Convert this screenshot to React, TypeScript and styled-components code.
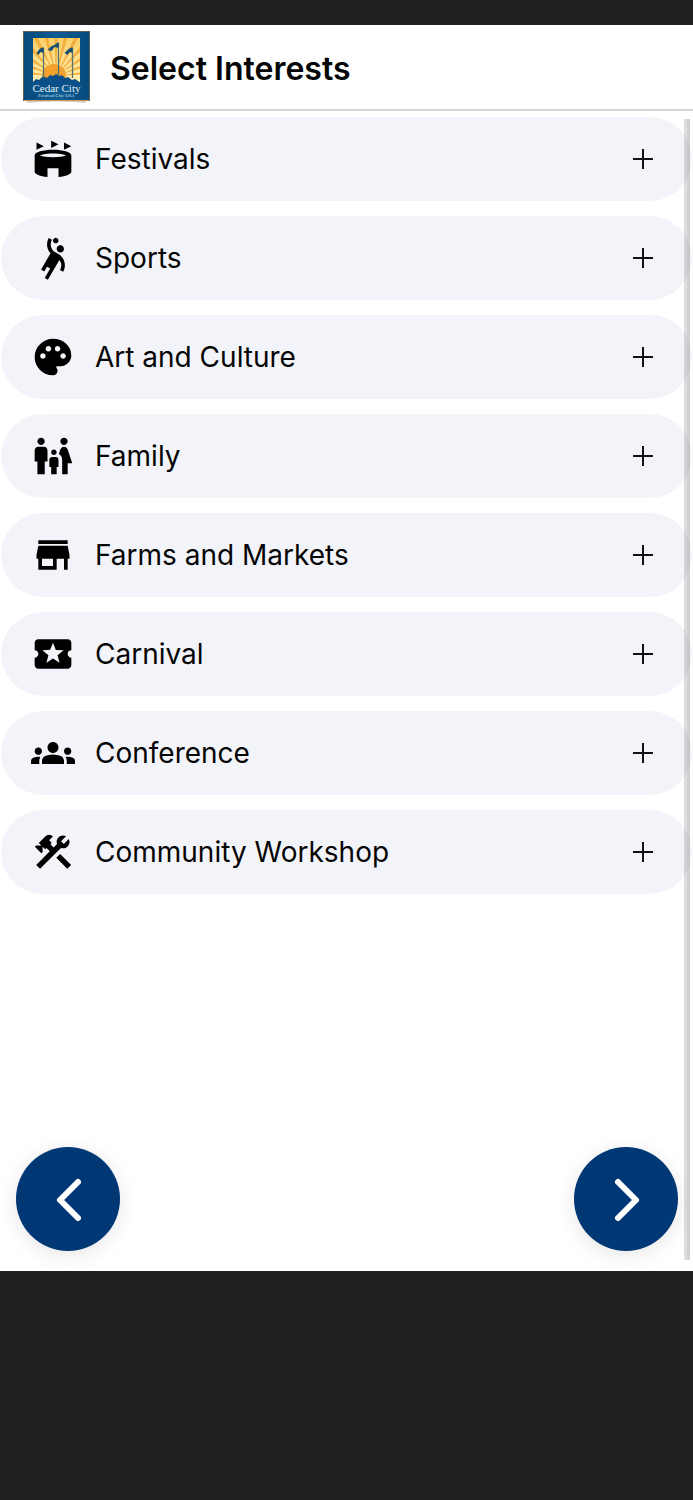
import React, { useState } from "react";
import styled, { createGlobalStyle } from "styled-components";
import {
  MdStadium,
  MdSportsHandball,
  MdPalette,
  MdFamilyRestroom,
  MdLocalActivity,
  MdGroups,
  MdConstruction,
} from "react-icons/md";

const GlobalStyle = createGlobalStyle`
  * { box-sizing: border-box; }
  body {
    margin: 0;
    background: #202022;
    font-family: Inter, "Liberation Sans", sans-serif;
    color: #050505;
  }
`;

const Screen = styled.div`
  display: flex;
  flex-direction: column;
  min-height: 100vh;
  padding: 25px 0 229px;
  background: #202022;
`;

const Sheet = styled.div`
  display: flex;
  flex: 1;
  flex-direction: column;
  background: #fff;
`;

const Header = styled.header`
  display: flex;
  align-items: center;
  gap: 20px;
  height: 86px;
  padding: 0 23px;
  border-bottom: 2px solid #d6d6d6;
`;

const Logo = styled.svg`
  display: block;
  width: 67px;
  height: 74px;
`;

const Title = styled.h1`
  margin: 0;
  padding-top: 4px;
  font-size: 32px;
  line-height: 36px;
  font-weight: 600;
`;

const Body = styled.div`
  position: relative;
  display: flex;
  flex: 1;
  flex-direction: column;
  justify-content: space-between;
  padding: 6px 1px 20px;
`;

const List = styled.ul`
  display: flex;
  flex-direction: column;
  gap: 15px;
  margin: 0;
  padding: 0;
  list-style: none;
`;

const InterestButton = styled.button`
  display: flex;
  align-items: center;
  gap: 20px;
  width: 100%;
  height: 84px;
  padding: 0 38px 0 30px;
  border: 0;
  border-radius: 42px;
  background: #f3f4f9;
  color: inherit;
  font: inherit;
  text-align: left;
  cursor: pointer;

  > svg {
    flex: none;
  }
`;

const Label = styled.span`
  flex: 1;
  font-size: 28px;
  line-height: 36px;
`;

const Toggle = styled.svg`
  width: 22px;
  height: 22px;
  fill: none;
  stroke: #111;
  stroke-width: 2;
`;

const Scrollbar = styled.div`
  position: absolute;
  top: 8px;
  right: 3px;
  bottom: 11px;
  width: 6px;
  border-right: 3px solid rgba(0, 0, 0, 0.18);
  background: rgba(0, 0, 0, 0.13);
  background-clip: padding-box;
`;

const Pager = styled.nav`
  display: flex;
  justify-content: space-between;
  padding: 0 14px 0 15px;
`;

const RoundButton = styled.button`
  display: flex;
  align-items: center;
  justify-content: center;
  width: 104px;
  height: 104px;
  padding: 0;
  border: 0;
  border-radius: 50%;
  background: #003775;
  box-shadow: 0 4px 20px rgba(0, 0, 0, 0.1);
  cursor: pointer;

  svg {
    width: 48px;
    height: 48px;
    fill: none;
    stroke: #fff;
    stroke-width: 6;
    stroke-linecap: round;
    stroke-linejoin: round;
  }
`;

function StoreIcon({ size }: { size: number }) {
  return (
    <svg viewBox="0 0 24 24" width={size} height={size} fill="#000" aria-hidden>
      <path d="M20 4H4v2h16V4zm1 10v-2l-1-5H4l-1 5v2h1v6h10v-6h4v6h2v-6h1v0zm-9 4H6v-4h6v4z" />
    </svg>
  );
}

const interests = [
  { name: "Festivals", Icon: MdStadium },
  { name: "Sports", Icon: MdSportsHandball },
  { name: "Art and Culture", Icon: MdPalette },
  { name: "Family", Icon: MdFamilyRestroom },
  { name: "Farms and Markets", Icon: StoreIcon },
  { name: "Carnival", Icon: MdLocalActivity },
  { name: "Conference", Icon: MdGroups },
  { name: "Community Workshop", Icon: MdConstruction },
];

const rays = [-84, -70, -56, -42, -28, -14, 0, 14, 28, 42, 56, 70, 84];

function CityLogo() {
  return (
    <Logo viewBox="0 0 67 74" role="img" aria-label="Cedar City">
      <defs>
        <linearGradient id="sky" x1="0" y1="0" x2="0" y2="1">
          <stop offset="0" stopColor="#f9cf69" />
          <stop offset="1" stopColor="#fff0b4" />
        </linearGradient>
        <linearGradient id="frame" x1="0" y1="0" x2="1" y2="0">
          <stop offset="0" stopColor="#064a7c" />
          <stop offset="0.5" stopColor="#0a5c92" />
          <stop offset="1" stopColor="#064a7c" />
        </linearGradient>
        <clipPath id="window">
          <rect x="10" y="8" width="47" height="44" />
        </clipPath>
      </defs>
      <path d="M3 71l2 2q28-3 57 0l2-2z" fill="#d3d1ce" />
      <rect x="0.5" y="1.5" width="66" height="69" fill="url(#frame)" stroke="#665f50" />
      <path d="M1 70.500h65" stroke="#c79a55" />
      <rect x="10" y="8" width="47" height="44" fill="url(#sky)" />
      <g clipPath="url(#window)">
        {rays.map((angle) => (
          <path
            key={angle}
            d="M33 46L31 0h4z"
            fill="#f4ae3d"
            transform={`rotate(${angle} 33 46)`}
          />
        ))}
        <circle cx="31" cy="46" r="12" fill="#f3a12c" />
      </g>
      <path
        d="M9 53l4-4 3 1 4-4 4 2 3-3 3 1 3-2 4 2 2-1 3 3 3-1 4 3 3-1 6 4v4H9z"
        fill="#0a4f87"
      />
      <path d="M20.500 48V18M35.500 46V13M49.500 48V18" stroke="#54756f" strokeWidth="1.300" />
      <path
        d="M20.500 17v6l-3-1-2 3-2-2 3-4zM35.500 12v6l-4-1-3 4-4-1 4-4 3-1zM49.500 17v6l-3-1-2 3-3-2 4-4z"
        fill="#174d74"
      />
      <text
        x="33.500"
        y="62"
        textAnchor="middle"
        fontFamily="Liberation Serif, serif"
        fontSize="11"
        fill="#e5eef5"
      >
        Cedar City
      </text>
      <text
        x="33"
        y="67"
        textAnchor="middle"
        fontFamily="Liberation Serif, serif"
        fontStyle="italic"
        fontSize="5"
        fill="#d8e6f0"
      >
        Festival City USA
      </text>
    </Logo>
  );
}

export default function App() {
  const [selected, setSelected] = useState<string[]>([]);

  const toggle = (name: string) =>
    setSelected((current) =>
      current.includes(name) ? current.filter((n) => n !== name) : [...current, name]
    );

  return (
    <Screen>
      <GlobalStyle />
      <Sheet>
        <Header>
          <CityLogo />
          <Title>Select Interests</Title>
        </Header>
        <Body>
          <List>
            {interests.map(({ name, Icon }) => (
              <li key={name}>
                <InterestButton
                  type="button"
                  aria-pressed={selected.includes(name)}
                  onClick={() => toggle(name)}
                >
                  <Icon size={44} color="#000" aria-hidden />
                  <Label>{name}</Label>
                  <Toggle viewBox="0 0 22 22" aria-hidden>
                    <path d={selected.includes(name) ? "M1 11h20" : "M1 11h20M11 1v20"} />
                  </Toggle>
                </InterestButton>
              </li>
            ))}
          </List>
          <Pager aria-label="Steps">
            <RoundButton type="button" aria-label="Back">
              <svg viewBox="0 0 48 48" aria-hidden>
                <path d="M34 7L16 25l18 18" />
              </svg>
            </RoundButton>
            <RoundButton type="button" aria-label="Next">
              <svg viewBox="0 0 48 48" aria-hidden>
                <path d="M16 7l18 18-18 18" />
              </svg>
            </RoundButton>
          </Pager>
          <Scrollbar />
        </Body>
      </Sheet>
    </Screen>
  );
}
